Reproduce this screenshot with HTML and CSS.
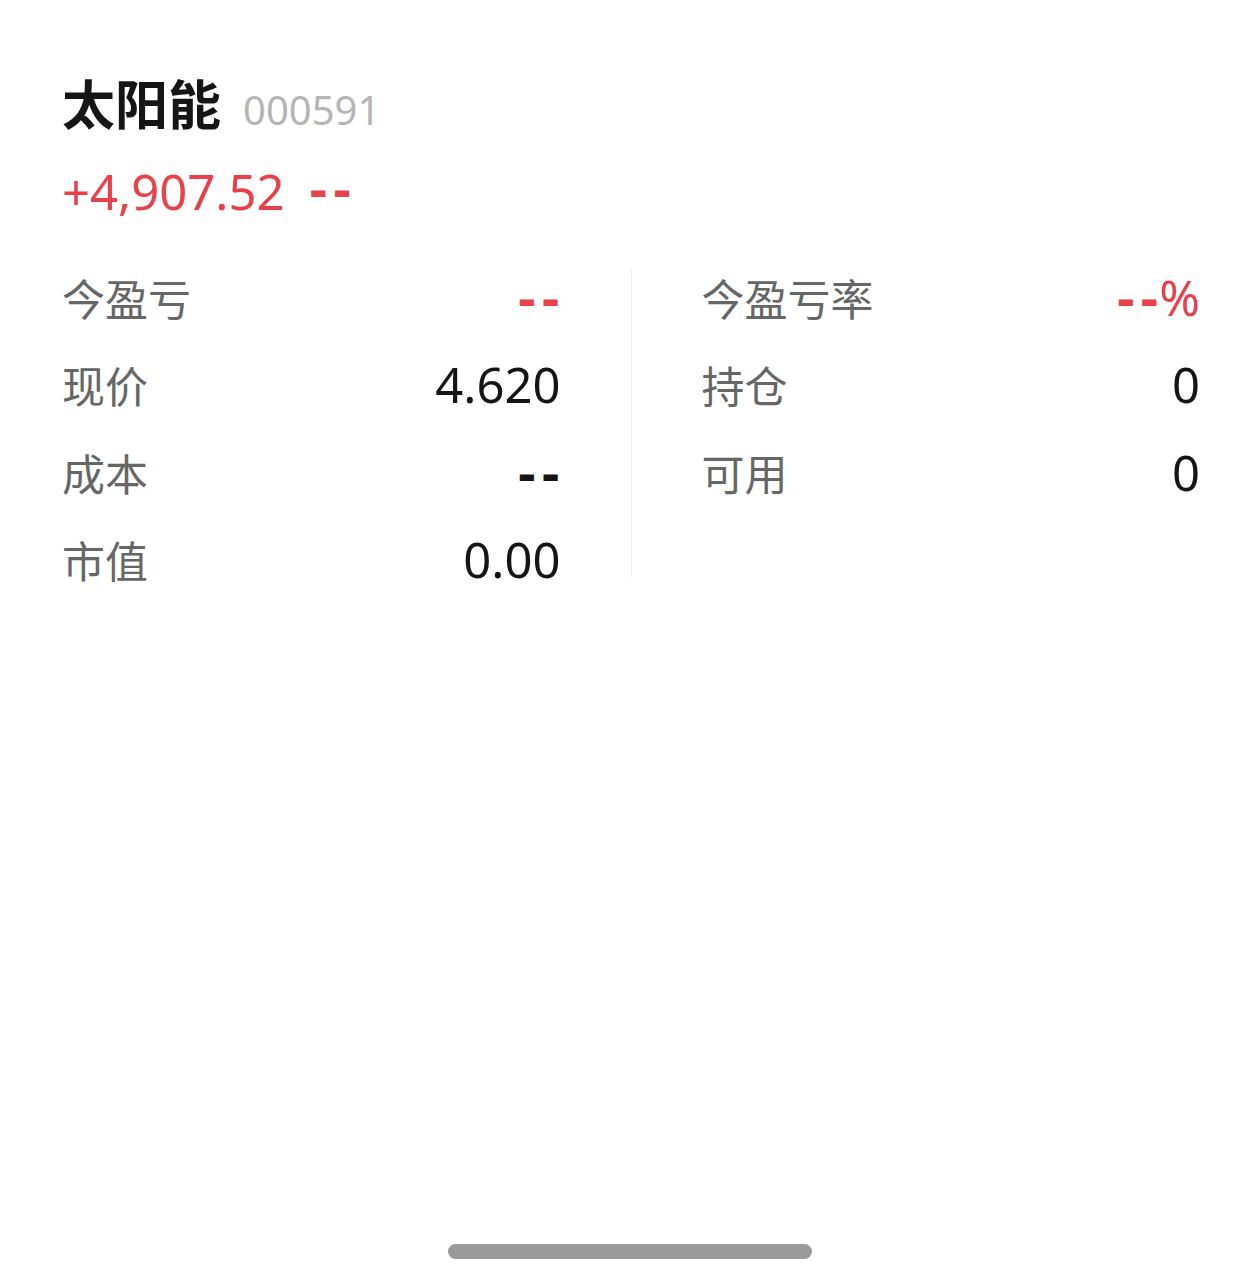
FILE: index.html
```html
<!DOCTYPE html>
<html lang="zh-CN">
<head>
  <meta charset="UTF-8">
  <meta name="viewport" content="width=device-width, initial-scale=1.0">
  <title>太阳能 000591</title>
  <link rel="stylesheet" href="styles.css">
</head>
<body>
  <div class="page">
    <div class="titulo">
      <span class="nome">太阳能</span>
      <span class="codigo">000591</span>
    </div>
    <div class="variacao">
      <span>+4,907.52</span>
      <span class="traco">--</span>
    </div>

    <div class="tabela">
      <div class="coluna">
        <div class="linha"><span class="rotulo">今盈亏</span><span class="valor vermelho"><span class="traco">--</span></span></div>
        <div class="linha"><span class="rotulo">现价</span><span class="valor">4.620</span></div>
        <div class="linha"><span class="rotulo">成本</span><span class="valor"><span class="traco">--</span></span></div>
        <div class="linha"><span class="rotulo">市值</span><span class="valor">0.00</span></div>
      </div>
      <div class="divisor"></div>
      <div class="coluna">
        <div class="linha"><span class="rotulo">今盈亏率</span><span class="valor vermelho"><span class="traco">--</span>%</span></div>
        <div class="linha"><span class="rotulo">持仓</span><span class="valor">0</span></div>
        <div class="linha"><span class="rotulo">可用</span><span class="valor">0</span></div>
      </div>
    </div>
  </div>

  <div class="barra-casa"></div>
</body>
</html>
```

FILE: styles.css
```css
body {
  margin: 0;
  background-color: #ffffff;
  font-family: "Noto Sans", "Noto Sans CJK SC", sans-serif;
  height: 1278px;
  position: relative;
  overflow: hidden;
}
.page {
  padding: 66px 37px 0 62px;
}
.titulo {
  display: flex;
  align-items: baseline;
  gap: 22px;
  height: 72px;
  line-height: 72px;
}
.nome {
  font-family: "Noto Sans CJK SC", sans-serif;
  font-size: 53px;
  font-weight: 700;
  color: #151515;
}
.codigo {
  font-size: 40px;
  color: #b4b4b4;
}
.variacao {
  display: flex;
  gap: 20px;
  margin-top: 18px;
  height: 70px;
  line-height: 70px;
  font-size: 49px;
  color: #e8414b;
}
.traco {
  font-family: "DejaVu Sans Mono", monospace;
  font-weight: 700;
  letter-spacing: -4px;
  font-size: 46px;
}
.tabela {
  display: grid;
  grid-template-columns: 1fr 1px 1fr;
  column-gap: 70px;
  margin-top: 27px;
}
.coluna {
  display: flex;
  flex-direction: column;
}
.linha {
  display: flex;
  justify-content: space-between;
  align-items: center;
  height: 87.5px;
}
.rotulo {
  font-family: "Noto Sans CJK SC", sans-serif;
  font-size: 43px;
  color: #666666;
}
.valor {
  font-size: 49px;
  color: #151515;
}
.vermelho {
  color: #e8414b;
}
.divisor {
  background-color: #eeeeee;
  margin: 16px 0 26px;
}
.barra-casa {
  position: absolute;
  left: 448px;
  top: 1244px;
  width: 364px;
  height: 15px;
  border-radius: 8px;
  background-color: #9a9a9a;
}
```
